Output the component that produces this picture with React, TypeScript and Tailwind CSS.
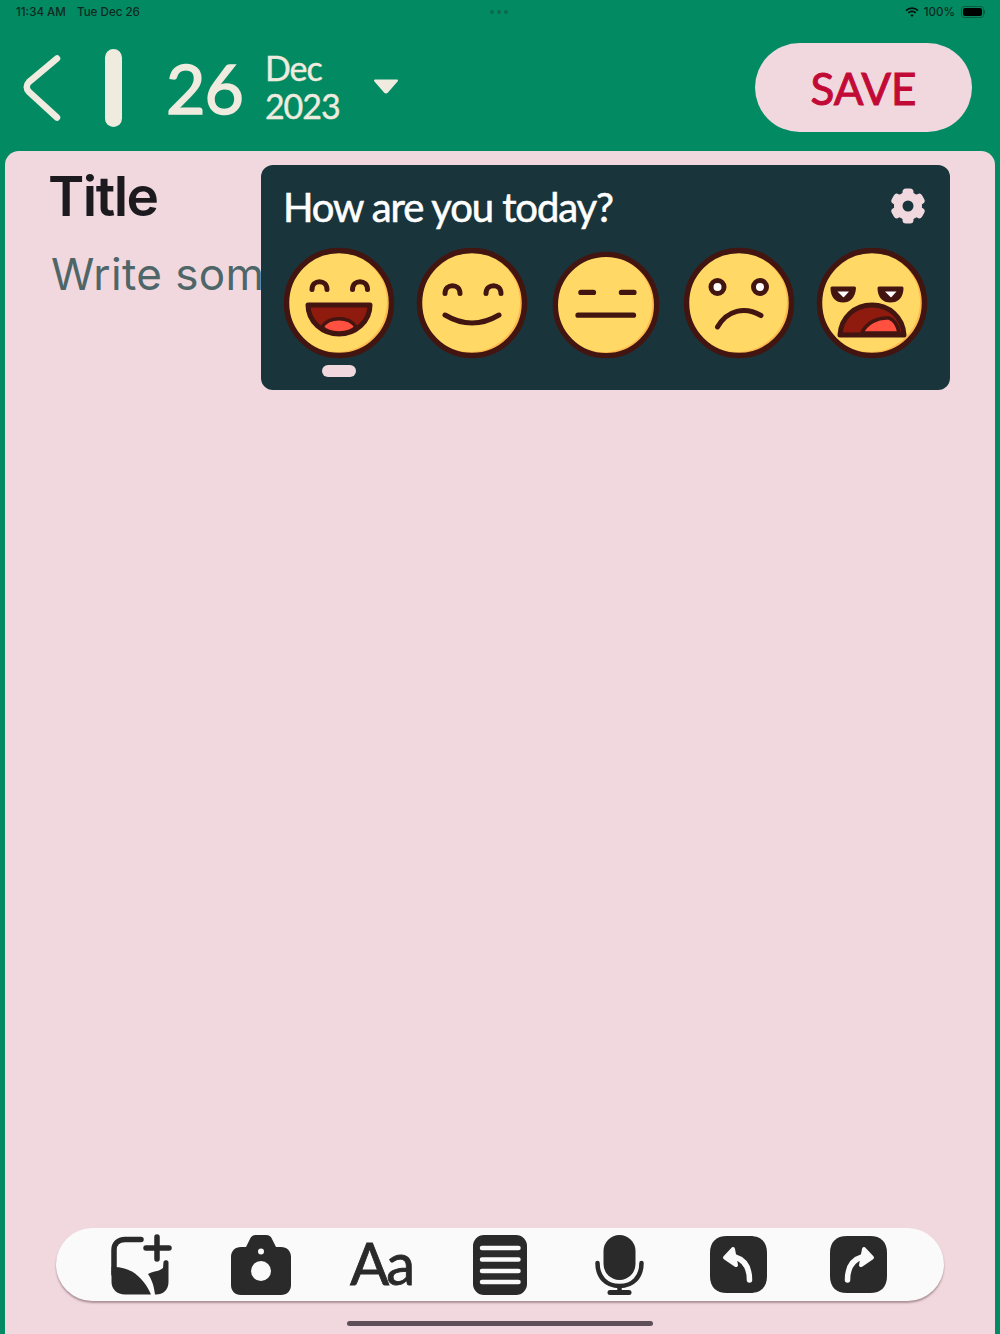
import { ReactNode } from 'react';

const outline = '#431511';
const yellow = '#ffd865';

const Face = ({ size = 112, children }: { size?: number; children: ReactNode }) => (
    <svg width={size} height={size} viewBox="0 0 112 112" fill="none" strokeLinecap="round" strokeLinejoin="round">
        <circle cx="56" cy="56" r="52" fill="#fdb94f" />
        <circle cx="54" cy="55" r="50" fill={yellow} />
        <circle cx="56" cy="56" r="52.5" stroke={outline} strokeWidth="5.5" />
        {children}
    </svg>
);

const Laughing = () => (
    <Face>
        <path d="M29 42.5 C29 32 44 32 44 42.5 M69.5 42.5 C69.5 32 84.5 32 84.5 42.5" stroke={outline} strokeWidth="5" />
        <path d="M25 58 H87 C87 75 72 87 56 87 C40 87 25 75 25 58Z" fill="#8f1a0e" stroke={outline} strokeWidth="5" />
        <path d="M39 80 C46 69 66 69 73 80 C66 88 46 88 39 80Z" fill="#ff5040" stroke={outline} strokeWidth="3.5" />
    </Face>
);

const Smiling = () => (
    <Face>
        <path d="M29 46.5 C29 36 44 36 44 46.5 M70 46.5 C70 36 85 36 85 46.5" stroke={outline} strokeWidth="5" />
        <path d="M29 68 Q56 84 83 68" stroke={outline} strokeWidth="5" />
    </Face>
);

const Neutral = () => (
    <div className="flex h-[112px] w-[112px] items-center justify-center pt-[3px]">
        <Face size={108}>
            <path d="M30 43 H43 M72 43 H85 M27 66.5 H84.5" stroke={outline} strokeWidth="5.5" />
        </Face>
    </div>
);

const Sad = () => (
    <Face>
        <circle cx="34.5" cy="40" r="6.5" fill="#fff" stroke={outline} strokeWidth="5" />
        <circle cx="77" cy="40" r="6.5" fill="#fff" stroke={outline} strokeWidth="5" />
        <path d="M34.5 80 C44 63 62 59 78 68.5" stroke={outline} strokeWidth="5" />
    </Face>
);

const Groaning = () => (
    <Face>
        <path d="M16 41 H38.5 C38 50 33 54 27 54 C21 54 16 50 16 41Z" fill={outline} stroke={outline} strokeWidth="3" />
        <path d="M63 41 H86 C86 50 81 54 74.5 54 C68 54 63 50 63 41Z" fill={outline} stroke={outline} strokeWidth="3" />
        <path d="M21.5 44.5 H33 L28 50 Q27.5 50.5 27 50Z M69 44.5 H80.5 L75.5 50 Q75 50.5 74.5 50Z" fill="#fff" />
        <path d="M24 88 C25 70 39 58 56 58 C73 58 87 70 88 88Z" fill="#8f1a0e" stroke={outline} strokeWidth="5" />
        <path d="M46 86 C50 76 62 70 73 71 C79 73 82 80 83 86Z" fill="#ff5040" stroke={outline} strokeWidth="3.5" />
    </Face>
);

const Gear = () => (
    <svg width="36" height="36" viewBox="0 0 36 36">
        <g fill="#f1d8de">
            <circle cx="18" cy="18" r="14" />
            <rect x="12.5" y="0.5" width="11" height="35" rx="3.5" />
            <rect x="12.5" y="0.5" width="11" height="35" rx="3.5" transform="rotate(60 18 18)" />
            <rect x="12.5" y="0.5" width="11" height="35" rx="3.5" transform="rotate(120 18 18)" />
        </g>
        <circle cx="18" cy="18" r="5.5" fill="#19343b" />
    </svg>
);

const AddPhoto = () => (
    <svg width="61" height="61" viewBox="0 0 61 61" fill="#2a2a2a">
        <path d="M30 5.5 H14 C7 5.5 3 10 3 16 V40" fill="none" stroke="#2a2a2a" strokeWidth="5.5" strokeLinecap="round" />
        <path d="M0.5 33 C14 32 30 38 40 60.5 H14 C6 60.5 0.5 55 0.5 48Z" />
        <path d="M37 40 C41 37 48 38 52 34 L52.5 28 C53 25.5 57 25.5 57.5 28 V48 C57.5 56 52 60.5 45 60.5 H44 C43 52 41 46 37 40Z" />
        <path d="M46 3 V25 M35 14 H58" fill="none" stroke="#2a2a2a" strokeWidth="5.5" strokeLinecap="round" />
    </svg>
);

const Camera = () => (
    <svg width="60" height="60" viewBox="0 0 60 60">
        <path
            d="M10 12 H15 L19 4 C20 1.5 22 0 25 0 H35 C38 0 40 1.5 41 4 L45 12 H50 C56 12 60 16 60 22 V50 C60 56 56 60 50 60 H10 C4 60 0 56 0 50 V22 C0 16 4 12 10 12Z"
            fill="#2a2a2a"
        />
        <circle cx="30" cy="36" r="10" fill="#fafafa" />
        <circle cx="30" cy="16.5" r="3" fill="#fafafa" />
    </svg>
);

const ListBox = () => (
    <svg width="54" height="60" viewBox="0 0 54 60">
        <rect width="54" height="60" rx="11" fill="#2a2a2a" />
        <path d="M9 13 H45.5 M9 24.5 H45.5 M9 36 H45.5 M9 47 H45.5" stroke="#fafafa" strokeWidth="4.5" strokeLinecap="round" />
    </svg>
);

const Mic = () => (
    <svg width="49" height="60" viewBox="0 0 49 60" fill="none">
        <rect x="8.5" y="0" width="32" height="45" rx="16" fill="#2a2a2a" />
        <path d="M2.5 28 C2.5 42 11 51 24.5 51 C38 51 46.5 42 46.5 28" stroke="#2a2a2a" strokeWidth="4.5" strokeLinecap="round" />
        <path d="M24.5 51 V57" stroke="#2a2a2a" strokeWidth="4.5" />
        <path d="M15 57.5 H34" stroke="#2a2a2a" strokeWidth="5" strokeLinecap="round" />
    </svg>
);

const Turn = ({ flip = false }: { flip?: boolean }) => (
    <svg width="57" height="57" viewBox="0 0 57 57" className={flip ? '-scale-x-100' : ''}>
        <path d="M17 0 H40 C51 0 57 6 57 17 V40 C57 51 51 57 40 57 H17 C6 57 0 51 0 40 V17 C0 6 6 0 17 0Z" fill="#2a2a2a" />
        <path d="M39.5 44 C39.5 32 35 24 25 21" fill="none" stroke="#fafafa" strokeWidth="5.5" strokeLinecap="round" />
        <path d="M23 13 L15 21.5 L26 29Z" fill="#fafafa" stroke="#fafafa" strokeWidth="4" strokeLinejoin="round" />
    </svg>
);

const App = () => {
    const faces = [<Laughing key="laughing" />, <Smiling key="smiling" />, <Neutral key="neutral" />, <Sad key="sad" />, <Groaning key="groaning" />];

    return (
        <div className="flex h-[1334px] w-[1000px] flex-col overflow-hidden bg-[#028a63] font-[Lato,sans-serif]">
            {/* Status bar */}
            <div className="relative flex h-[24px] shrink-0 items-center justify-between pl-[16px] pr-[15px] pt-[1px] font-[Inter,sans-serif] text-[11.6px] font-medium text-[#10291f]">
                <div className="flex gap-[11px]">
                    <span>11:34 AM</span>
                    <span>Tue Dec 26</span>
                </div>
                <div className="absolute left-[490px] top-[10px] flex gap-[3px]">
                    <span className="h-[4px] w-[4px] rounded-full bg-[#0a6b4d]" />
                    <span className="h-[4px] w-[4px] rounded-full bg-[#0a6b4d]" />
                    <span className="h-[4px] w-[4px] rounded-full bg-[#0a6b4d]" />
                </div>
                <div className="flex items-center gap-[2px]">
                    <svg width="14" height="11" viewBox="0 0 14 11" fill="none" stroke="#06120d" strokeWidth="1.8">
                        <path d="M1 3.6 C4.4 0.4 9.6 0.4 13 3.6 M3.3 5.9 C5.4 4 8.6 4 10.7 5.9" />
                        <path d="M5.2 8 C6.3 7.2 7.7 7.2 8.8 8 L7 10Z" fill="#06120d" stroke="none" />
                    </svg>
                    <span className="ml-[3px]">100%</span>
                    <div className="ml-[4px] flex items-center">
                        <div className="h-[12px] w-[23px] rounded-[3px] border border-[#0a5c41] p-[1px]">
                            <div className="h-full w-full rounded-[2px] bg-black" />
                        </div>
                        <div className="h-[4px] w-[1px] bg-[#0a5c41]" />
                    </div>
                </div>
            </div>

            {/* Date header */}
            <div className="flex h-[127px] shrink-0 items-center pl-[23px] pr-[28px] text-[#efebdf]">
                <svg width="38" height="66" viewBox="0 0 38 66" fill="none" className="mt-[1px]">
                    <path d="M34 3.5 L6 27 C3 30 3 34 6 37 L34 62.5" stroke="#efebdf" strokeWidth="6.5" strokeLinecap="round" />
                </svg>
                <div className="ml-[44px] h-[78px] w-[17px] rounded-full bg-[#efebdf]" />
                <span className="ml-[44px] text-[68px] leading-none tracking-[-1px] [-webkit-text-stroke:1.5px_#efebdf]">26</span>
                <div className="ml-[22px] mt-[-1px] flex flex-col text-[34px] leading-[38px] tracking-[-1px] [-webkit-text-stroke:0.4px_#efebdf]">
                    <span>Dec</span>
                    <span>2023</span>
                </div>
                <svg width="26" height="15" viewBox="0 0 26 15" className="ml-[33px] mt-[-3px]">
                    <path d="M2 1.5 H24 L14 13 C13.5 13.6 12.5 13.6 12 13Z" fill="#efebdf" stroke="#efebdf" strokeWidth="2" strokeLinejoin="round" />
                </svg>
                <button className="ml-auto flex h-[89px] w-[217px] items-center justify-center rounded-full bg-[#f1d8de] text-[44px] text-[#c20a37] [-webkit-text-stroke:1px_#c20a37]">
                    SAVE
                </button>
            </div>

            {/* Editor */}
            <div className="relative mx-[5px] flex min-h-0 flex-1 flex-col rounded-t-[14px] bg-[#f1d8de] pb-[8px]">
                <h1 className="ml-[43px] mt-[13px] font-[Inter,sans-serif] text-[55px] font-semibold leading-[64px] tracking-[-1.5px] text-[#1c1a1f]">
                    Title
                </h1>
                <p className="ml-[46px] mt-[20px] font-[Inter,sans-serif] text-[44px] leading-[52px] tracking-[0.4px] text-[#4f6668]">
                    Write something
                </p>

                {/* Mood popover */}
                <div className="absolute left-[256px] top-[14px] h-[225px] w-[689px] rounded-[12px] bg-[#19343b] pl-[22px] pt-[18px]">
                    <div className="flex items-center justify-between pr-[24px]">
                        <span className="text-[40px] leading-[48px] tracking-[-1.1px] text-white [-webkit-text-stroke:0.6px_#ffffff]">How are you today?</span>
                        <div className="mt-[-3px]">
                            <Gear />
                        </div>
                    </div>
                    <div className="mt-[16px] flex gap-[21.3px]">
                        {faces.map((face, i) => (
                            <div key={i} className="flex w-[112px] flex-col items-center">
                                {face}
                                {i === 0 && <div className="mt-[6px] h-[12px] w-[34px] rounded-full bg-[#f1d8de]" />}
                            </div>
                        ))}
                    </div>
                </div>

                {/* Toolbar */}
                <div className="mx-[51px] mt-auto flex h-[73px] items-center rounded-full bg-[#fafafa] pl-[25px] shadow-[0_2px_2px_rgba(90,60,70,0.45)]">
                    <div className="flex w-[120px] justify-center"><AddPhoto /></div>
                    <div className="flex w-[120px] justify-center"><Camera /></div>
                    <div className="mt-[-4px] flex w-[120px] justify-center text-[58px] leading-none tracking-[-3px] text-[#2a2a2a] [-webkit-text-stroke:0.8px_#2a2a2a]">Aa</div>
                    <div className="flex w-[118px] justify-center"><ListBox /></div>
                    <div className="flex w-[120px] justify-center"><Mic /></div>
                    <div className="flex w-[119px] justify-center"><Turn /></div>
                    <div className="flex w-[120px] justify-center"><Turn flip /></div>
                </div>
                <div className="mx-auto mt-[20px] h-[5px] w-[306px] rounded-full bg-[#5f4f57]" />
            </div>
        </div>
    );
};

export default App;
